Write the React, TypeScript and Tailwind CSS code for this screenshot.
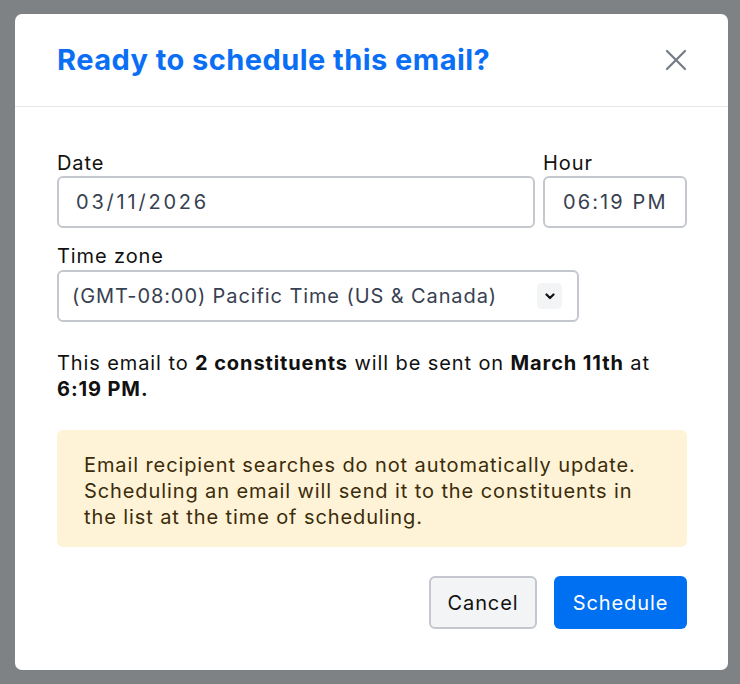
import React from "react";

export default function App() {
  return (
    <div
      className="w-full h-[684px] bg-[#7f8285] pt-[14px] pl-[15px]"
      style={{ fontFamily: "Inter, 'Noto Sans', sans-serif" }}
    >
      <div className="w-[713px] h-[656px] bg-white rounded-[7px] flex flex-col">
        <div className="h-[93px] pl-[42px] pr-[40px] flex items-center justify-between border-b border-[#e5e7eb]">
          <h2 className="text-[29px] font-bold text-[#0a6ff5] tracking-[0.45px] leading-[36px]">
            Ready to schedule this email?
          </h2>
          <button className="w-[24px] h-[24px] flex items-center justify-center text-[#747b86]">
            <svg width="22" height="22" viewBox="0 0 22 22" fill="none" stroke="currentColor" strokeWidth="2.2" strokeLinecap="round">
              <path d="M2 2 L20 20 M20 2 L2 20" />
            </svg>
          </button>
        </div>
        <div className="pl-[42px] pr-[41px] pt-[43px] flex flex-col text-[#111111] text-[20px] tracking-[0.9px]">
          <div className="flex gap-[8px]">
            <div className="w-[478px] flex flex-col">
              <label className="leading-[26px]">Date</label>
              <div className="h-[52px] border-2 border-[#c4c8ce] rounded-[6px] pl-[17px] flex items-center text-[#374151] tracking-[2.8px]">
                03/11/2026
              </div>
            </div>
            <div className="w-[144px] flex flex-col">
              <label className="leading-[26px]">Hour</label>
              <div className="h-[52px] border-2 border-[#c4c8ce] rounded-[6px] pl-[18px] flex items-center text-[#374151] tracking-[2.1px]">
                06:19 PM
              </div>
            </div>
          </div>
          <label className="mt-[15px] leading-[26px] mb-[1px]">Time zone</label>
          <div className="w-[522px] h-[52px] border-2 border-[#c4c8ce] rounded-[6px] pl-[13px] pr-[15px] flex items-center justify-between text-[#374151]">
            <span>(GMT-08:00) Pacific Time (US &amp; Canada)</span>
            <span className="w-[25px] h-[26px] rounded-[5px] bg-[#f3f4f6] flex items-center justify-center">
              <svg width="10" height="7" viewBox="0 0 10 7" fill="none" stroke="#111" strokeWidth="2.2" strokeLinecap="round" strokeLinejoin="round">
                <path d="M1.5 1.5 L5 5 L8.5 1.5" />
              </svg>
            </span>
          </div>
          <p className="mt-[28px] leading-[26px] text-[#111111]">
            This email to <b className="font-bold">2 constituents</b> will be sent on{" "}
            <b className="font-bold">March 11th</b> at <b className="font-bold">6:19 PM.</b>
          </p>
          <div className="mt-[28px] bg-[#fef3d6] rounded-[6px] h-[117px] pl-[27px] pr-[24px] pt-[22px] leading-[26px] text-[#3b2c0c]">
            Email recipient searches do not automatically update. Scheduling an email will send it to the constituents in the list at the time of scheduling.
          </div>
          <div className="mt-[29px] flex justify-end gap-[17px]">
            <button className="w-[108px] h-[53px] rounded-[6px] bg-[#f3f4f6] border-2 border-[#c4c8ce] text-[#111111]">
              Cancel
            </button>
            <button className="w-[133px] h-[53px] rounded-[6px] bg-[#0070f3] text-white">
              Schedule
            </button>
          </div>
        </div>
      </div>
    </div>
  );
}
